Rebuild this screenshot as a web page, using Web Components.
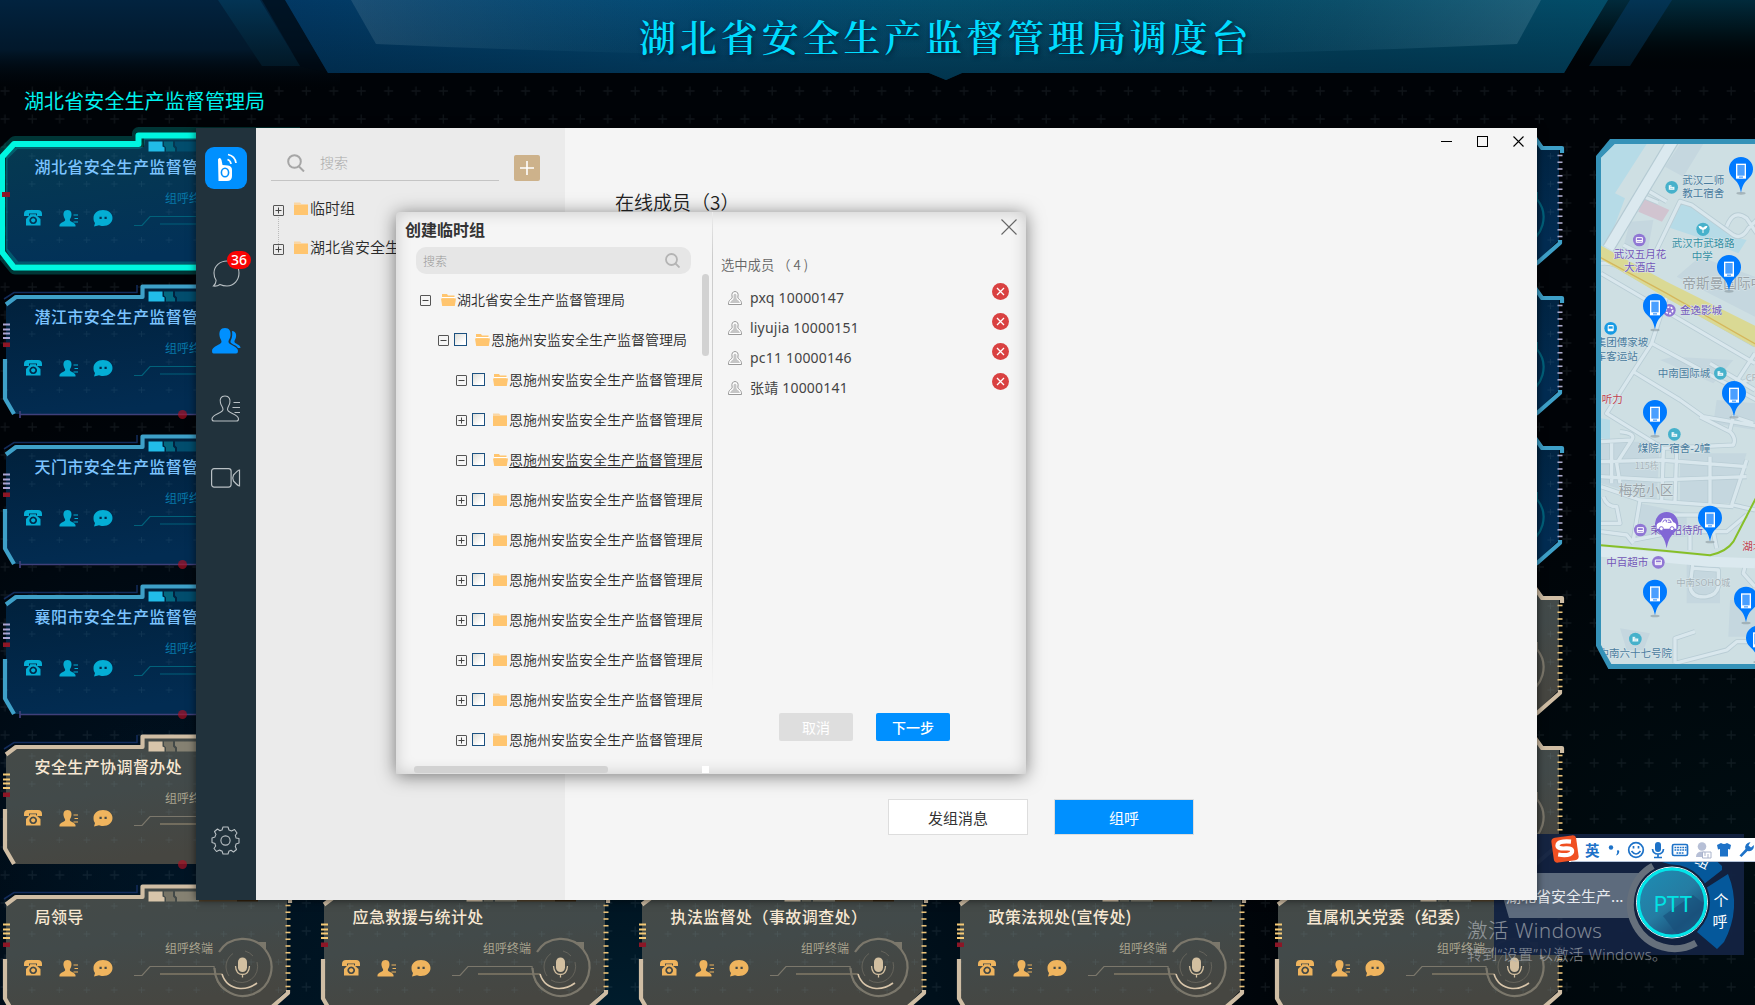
<!DOCTYPE html>
<html lang="zh-CN">
<head>
<meta charset="utf-8">
<title>湖北省安全生产监督管理局调度台</title>
<style>
html,body{margin:0;height:100%;overflow:hidden;background:#000}
body{font-family:"Noto Sans","Noto Sans CJK SC",sans-serif;color:#333}
</style>
</head>
<body>
<dispatch-desk></dispatch-desk>
<script>
const CJK = '"Noto Sans CJK SC","Noto Sans",sans-serif';
function define(name, render) {
  customElements.define(name, class extends HTMLElement {
    connectedCallback() {
      if (this.shadowRoot) return;
      this.attachShadow({ mode: 'open' }).innerHTML = render(this);
    }
  });
}

/* Top banner with the console title */
define('desk-banner', () => `
<style>
:host{display:block;position:relative;height:128px;box-sizing:border-box}
svg{position:absolute;left:0;top:0}
h1{position:relative;margin:0 0 0 639px;padding-top:9px;font:600 37px/54px "Noto Serif CJK SC","Source Han Serif SC","Noto Sans CJK SC",serif;letter-spacing:3.9px;color:#00dcff;text-shadow:1px 2px 4px rgba(0,20,40,.7);white-space:nowrap}
p{position:relative;margin:24px 0 0 24px;font:400 20px/28px ${CJK};letter-spacing:.1px;color:#00f2ee}
</style>
<svg width="1755" height="128" viewBox="0 0 1755 128">
<defs>
<linearGradient id="w" x1="0" x2="0" y1="0" y2="1"><stop offset="0" stop-color="#02233f"/><stop offset=".55" stop-color="#02182b"/><stop offset="1" stop-color="#010509" stop-opacity="0"/></linearGradient>
<linearGradient id="r" x1="0" x2="0" y1="0" y2="1"><stop offset="0" stop-color="#012a3b"/><stop offset=".45" stop-color="#001219"/><stop offset="1" stop-color="#000" stop-opacity="0"/></linearGradient>
<linearGradient id="t"><stop offset="0" stop-color="#023863"/><stop offset=".28" stop-color="#034872"/><stop offset=".5" stop-color="#044d6b"/><stop offset=".8" stop-color="#034661"/><stop offset="1" stop-color="#034c68"/></linearGradient>
<linearGradient id="d" x1="0" x2="0" y1="0" y2="1"><stop offset="0" stop-color="#001c30" stop-opacity="0"/><stop offset="1" stop-color="#001c30" stop-opacity=".5"/></linearGradient>
<linearGradient id="s" x1="0" x2="0" y1="0" y2="1"><stop offset="0" stop-color="#033454"/><stop offset="1" stop-color="#021826"/></linearGradient>
<linearGradient id="h"><stop offset="0" stop-color="#7fa0b0" stop-opacity=".2"/><stop offset=".3" stop-color="#2d80a0" stop-opacity=".02"/><stop offset=".7" stop-color="#2d80a0" stop-opacity=".02"/><stop offset="1" stop-color="#6f9db0" stop-opacity=".26"/></linearGradient>
</defs>
<path d="M0 0H340V90H0Z" fill="url(#w)"/><path d="M1600 0H1755V72H1560Z" fill="url(#r)"/>
<path d="M262 0H286L328 73 300 66Z" fill="#000a12" opacity=".55"/>
<path d="M218 0H260L300 66H262Z" fill="url(#s)"/>
<path d="M1630 0H1672L1630 66H1589Z" fill="url(#s)"/>
<path d="M285 0H1608L1564 73H962L946 80 929 73H328Z" fill="url(#t)"/>
<path d="M285 0H1608L1564 73H962L946 80 929 73H328Z" fill="url(#d)"/>
<path d="M351 0H1541L1517 44Q950 70 376 44Z" fill="url(#h)"/>
</svg>
<h1>湖北省安全生产监督管理局调度台</h1>
<p>湖北省安全生产监督管理局</p>`);

/* Group card: stepped frame, title, quick actions and talk dial */
define('group-card', el => {
  const kind = el.getAttribute('kind') || 'blue';
  const name = el.getAttribute('name') || '';
  const grey = kind === 'grey', active = kind === 'active';
  const line = active ? '#00f6e0' : grey ? '#cfbda4' : '#3ea0c8';
  const ico = grey ? '#efb45e' : '#04add4';
  const dial = grey ? '#7b776b' : '#01617a';
  const tick = grey ? '#e9c27a' : '#aaa8c8';
  const ticks = Array.from({ length: 13 }, (_, i) => `<path d="M285.500 ${25.5 + i * 6.75}h5" />`).join('');
  const frame = active ? `
<g fill="none" stroke-linejoin="round"><path d="M300 3.500H138.500V12.500H15L1 26V121L15 138H300" stroke="#00b9b0" stroke-opacity=".28" stroke-width="13"/>
<path d="M300 5.500H138.500V14H14L2 27V122L14 137.500H300" stroke="${line}" stroke-width="6"/></g>
<path d="M2 62h8v5H2z" fill="#8c1626"/>` : `
<g fill="none" stroke="${line}" stroke-width="4.200" stroke-linejoin="round">
<path d="M6 24.500 16 17H142.500V6.500H262L270 18H290V23"/><path d="M5 79V118.500L14 134"/><path d="M288 110V113L264 134"/></g>
<path d="M4 19 14 12.500H137V5" fill="none" stroke="#132c5c" stroke-width="1.500"/>
<g stroke="${grey ? '#f5ca76' : '#aaa3d2'}" stroke-width="2"><path d="M3 44.500h7M3 49.500h7M3 53.500h7M3 58h7"/></g>
<path d="M3 62.500h7v4.500H3z" fill="#8c1626"/>
<g stroke="${tick}" stroke-width="1.600">${ticks}</g>
${grey ? '' : '<path d="M20 131v7M20 134.500H262" stroke="#40407a" stroke-width="1.700"/>'}
<circle cx="182.500" cy="134.500" r="4.500" fill="#b01024" opacity=".65"/>`;
  return `
<style>
:host{display:block;position:relative;height:150px;overflow:visible}
.frame{position:absolute;left:0;top:0;overflow:visible}
.body{position:relative;box-sizing:border-box;padding:26px 0 0 24px;display:flex;flex-direction:column;white-space:nowrap}
b{font:500 16px/20px ${CJK};letter-spacing:.4px;margin-left:10.500px;height:20px;color:${grey ? '#f7e7d2' : '#7cc4ff'}}
small{font:400 12px/14px ${CJK};margin:15px 0 5px 141px;height:14px;color:${grey ? '#aaa48f' : '#0878a8'}}
.acts{display:flex;align-items:flex-start;color:${ico}}
.acts svg{display:block}
</style>
<svg class="frame" width="318" height="150" viewBox="0 0 318 150">
<defs><linearGradient id="f" x1="0" x2=".3" y1="0" y2="1">${active ? '<stop offset="0" stop-color="#063a50"/><stop offset="1" stop-color="#023158"/>' : grey ? '<stop offset="0" stop-color="#454a47"/><stop offset=".5" stop-color="#424a4a"/><stop offset="1" stop-color="#464641"/>' : '<stop offset="0" stop-color="#01203a"/><stop offset="1" stop-color="#022c52"/>'}</linearGradient>
<pattern id="p" width="27.400" height="28" patternUnits="userSpaceOnUse" x="5" y="5"><path d="M27 18v6M24 21h6M0 21h3" stroke="#8fb0c0" stroke-opacity=".1"/></pattern></defs>
<path d="M6 24 16 17H144V6H262L270 18H287V110L262 134H14L6 120Z" fill="url(#f)"/>
<path d="M6 24 16 17H144V6H262L270 18H287V110L262 134H14L6 120Z" fill="url(#p)"/>
<path d="M148.500 11.500h14v5l2 1v4h-16z" fill="${grey ? '#d8c5aa' : '#21bce8'}"/><path d="M164 11.500h9v5l2 2v3h-9v-4l-2-2z" fill="${grey ? '#777466' : '#036880'}"/><path d="M175 11.500h24v10h-22v-4l-2-2z" fill="${grey ? '#858172' : '#024d6d'}"/>
<path d="M199 11.500h38v10h-38z" fill="${grey ? '#54432b' : '#033a5c'}"/><path d="M237 11.500h21v10h-21z" fill="${grey ? '#35230f' : '#022a48'}"/>
${frame}
<g fill="none" stroke="${dial}" stroke-width="1.200"><path d="M134 95.500h8L150 86.500H214Q216 108 229 112" /><path d="M160 94H222" stroke="${grey ? '#9f9279' : dial}"/></g>
<g fill="none" stroke="${dial}"><path d="M219 72A28.500 28.500 0 1 1 214.500 88" stroke-width="2.200"/><path d="M233 73.500A16 16 0 0 0 229 96M245 71A16 16 0 0 1 253 76M257 82A16 16 0 0 1 233 100" stroke-width="1" opacity=".6"/></g>
<path d="M222 94Q226 107 240 108.500 249 109 257 103" fill="none" stroke="${grey ? '#d8c5aa' : '#0a8fae'}" stroke-width="1.600"/>
<path d="M255 62h11v10Q262 65 255 62Z" fill="${dial}"/>
<rect x="238" y="77.500" width="9" height="14.500" rx="4.500" fill="${grey ? '#d2bfa0' : '#0aa6c8'}"/><path d="M235.500 86Q236 94.500 242.500 94.500T249.500 86M242.500 94.500V97.500" fill="none" stroke="${grey ? '#d2bfa0' : '#0aa6c8'}" stroke-width="1.300"/>
</svg>
<div class="body">
${name ? `<b>${name}</b><small>组呼终端</small>
<div class="acts">
<svg width="18" height="17" viewBox="0 0 18 17" style="margin-right:17px"><path fill="currentColor" d="M0 4Q0 0 4 0H14Q18 0 18 4V6H13V3.500H5V6H0Z"/><path fill="currentColor" fill-rule="evenodd" d="M6 5V4.300H12V5L16.500 9V15.500H2V9ZM9.200 6.500A3.800 3.800 0 1 0 9.210 6.500ZM9.200 8.200A2.100 2.100 0 1 1 9.190 8.200Z"/></svg>
<svg width="20" height="17" viewBox="0 0 20 17" style="margin-right:14px"><path fill="currentColor" d="M8.500 0C12 0 13 3 12.300 6 12 8 11 8.500 10.800 10 11 12 16 12.500 16.500 15V16.500H.5V15C1 12.500 6 12 6.200 10 6 8.500 5 8 4.700 6 4 3 5 0 8.500 0Z"/><path d="M14.500 5H19M15.500 8.500H19M14.500 12H19" stroke="currentColor" stroke-width="1"/></svg>
<svg width="20" height="17" viewBox="0 0 20 17"><path fill="currentColor" fill-rule="evenodd" d="M10 0C15.500 0 19.500 3.500 19.500 8S15.500 16 10 16C8 16 7 15.700 6 15.200L1 16.500 2 13C1 12 .5 10 .5 8 .5 3.500 4.500 0 10 0ZM6.500 6.800V9H8.700V6.800ZM11.500 6.800V9H13.700V6.800Z"/></svg>
</div>` : ''}
</div>`;
});

/* Expander + optional check box + folder icon + label */
define('tree-node', el => {
  const open = el.hasAttribute('open'), check = el.hasAttribute('check');
  return `
<style>
:host{display:flex;align-items:center;height:var(--row,40px);white-space:nowrap;box-sizing:border-box;padding-left:calc(var(--level,0)*18px)}
svg{display:block;flex:none}
.x{margin-top:3px}
i{flex:none;width:11px;height:11px;border:1px solid #1c5180;background:linear-gradient(135deg,#dcdcd7,#fff 75%);margin:0 0 0 5px}
.fo{margin:1px 1px 0 ${check ? 8 : 10}px}
span{font:350 var(--fs,14px)/20px ${CJK};color:#2b2b2b;margin-top:-1px${el.hasAttribute('hovered') ? ';text-decoration:underline;text-underline-offset:2px' : ''}}
</style>
<svg class="x" width="11" height="11" viewBox="0 0 11 11"><rect x=".5" y=".5" width="10" height="10" rx=".5" fill="none" stroke="#555"/><path d="M2.500 5.500h6${open ? '' : 'M5.500 2.500v6'}" stroke="#444"/></svg>
${check ? '<i></i>' : ''}
<svg class="fo" width="15" height="14" viewBox="0 0 15 14">${open
  ? '<path d="M1 1h5l1 1.500h6.500V6H1z" fill="#ffc56f"/><path d="M1 4.600h13" stroke="#fff" stroke-width="1.200"/><path d="M0 5.500h15L13.800 13H1.200z" fill="#ffc56f"/>'
  : '<path d="M0 .5h6L7.500 2H14v4H0z" fill="#fad7a5"/><path d="M0 3h14v10H0z" fill="#ffc56f"/>'}</svg>
<span><slot></slot></span>`;
});

define('member-row', () => `
<style>
:host{display:flex;align-items:center;height:30px}
svg{display:block;flex:none}
span{font:400 14px/20px "Noto Sans","Noto Sans CJK SC",sans-serif;color:#444;margin-left:8px;flex:1;letter-spacing:.2px}
.del{margin-top:-14px}
</style>
<svg width="14" height="14" viewBox="0 0 14 14"><path d="M7 .5C9.500.5 10.500 3 10 5 9.500 6.700 10 7.500 11.500 8.500 13 9.500 13.500 11 13.500 13.500H.5C.5 11 1 9.500 2.500 8.500 4 7.500 4.500 6.700 4 5 3.500 3 4.500.5 7 .5Z" fill="#fff" stroke="#999"/><path d="M7 2.500Q9 3 8.500 5T9 8.500Q11.500 9.500 12 12H2Q2.500 9.500 5 8.500 6 7 5.500 5T7 2.500Z" fill="#c6c6c6"/></svg>
<span><slot></slot></span>
<svg class="del" width="17" height="17" viewBox="0 0 17 17"><circle cx="8.500" cy="8.500" r="8.500" fill="#d94141"/><path d="M5 5l7 7M12 5l-7 7" stroke="#fff" stroke-width="1.300"/></svg>`);

define('push-button', () => `
<style>:host{display:flex;align-items:center;justify-content:center;box-sizing:border-box;white-space:nowrap;font-family:${CJK}}</style><slot></slot>`);

define('side-rail', () => `
<style>
:host{display:flex;flex-direction:column;align-items:center;width:60px;flex:none;background:#21323c;box-sizing:border-box;padding-top:19px}
svg{display:block;flex:none}
.chat{position:relative;margin-top:70px}
.chat b{position:absolute;left:15px;top:-8px;width:24px;height:18px;border-radius:9px;background:#f90404;color:#fff;font:500 14px/18px "Noto Sans",sans-serif;text-align:center}
</style>
<svg width="42" height="42" viewBox="0 0 42 42"><rect width="42" height="42" rx="9" fill="#0090ff"/><path d="M13 12.500Q15 9.500 16.500 13L17.500 18 23 18.500Q27 19 27 23V29Q27 34 22 34H13.500Z" fill="#fff"/><ellipse cx="20" cy="25.500" rx="3.600" ry="4.300" fill="none" stroke="#0090ff" stroke-width="1.600"/><path d="M22.500 12.500Q25.500 13.500 26 17M23 7.500Q30 9 31 16" stroke="#fff" stroke-width="1.700" fill="none"/></svg>
<div class="chat"><svg width="28" height="28" viewBox="0 0 28 28"><path d="M15 2C8 2 2 7 2 14 2 17 3 19.500 4 21Q4.500 24 1.500 27 5 27.500 8 25.500C10 26.500 12 27 15 27 22 27 27 21 27 14S22 2 15 2Z" fill="none" stroke="#b9c0c4" stroke-width="1.100"/></svg><b>36</b></div>
<svg style="margin-top:41px" width="29" height="26" viewBox="0 0 29 26"><path fill="#0090ff" d="M13 0C17.500 0 19 3.500 18.500 7.500 18 11 16.500 11.500 16.500 14 16.500 17 26 18 26 23Q26 25.500 24 25.500H1.500Q0 25.500 0 23C0 18 9 17 9.500 14 9.500 11.500 8 11 7.500 7.500 7 3.500 8.500 0 13 0Z"/><path fill="#0090ff" d="M20 3C24 3.500 24.500 6.500 24 9 23.500 11.500 22 12.500 22.500 14 23 16 28.500 16.500 28.500 20H26C24.500 17 18.500 16 18.500 14 18.500 11.500 21 10 20 3Z"/></svg>
<svg style="margin-top:41px" width="30" height="27" viewBox="0 0 30 27"><path d="M14 1C18.500 1 19.500 4.500 18.800 8 18.300 11 16.500 11.500 16.500 14.500 16.500 18.500 27.500 18.500 27.500 24Q27.500 26 25.500 26H3Q1 26 1 24C1 18.500 12 18.500 12 14.500 12 11.500 10 11 9.500 8 8.500 4.500 9.500 1 14 1Z" fill="none" stroke="#b9c0c4" stroke-width="1.100"/><path d="M22.500 7.500H29M21.500 12.500H29M23.500 17.500H29" stroke="#b9c0c4"/></svg>
<svg style="margin-top:46px" width="30" height="20" viewBox="0 0 30 20"><rect x=".6" y=".6" width="19.500" height="18.500" rx="2.500" fill="none" stroke="#b9c0c4" stroke-width="1.200"/><path d="M28.500 2V18Q27 18 22.500 13Q21 10 22.500 7Q27 2 28.500 2Z" fill="none" stroke="#b9c0c4" stroke-width="1.200"/></svg>
<svg style="margin:auto 0 45px -1px" width="29" height="29" viewBox="-14.500 -14.500 29 29"><path fill="none" stroke="#b9c0c4" stroke-width="1.100" stroke-linejoin="round" d="M-2.500-13.500H2.500L3.500-10.500Q5-10 6-9.500L9-11 11.500-7.500 9.800-5Q10.300-4 10.500-2.500L13.500-2V2.500L10.500 3.500Q10.300 5 9.800 6L11 9 8 11.500 5.500 9.800Q4.500 10.300 3.500 10.500L2.500 13.500H-2.500L-3.500 10.500Q-5 10.300-6 9.500L-9 11-11.500 8-9.800 5.500Q-10.300 4.500-10.500 3L-13.500 2V-2.500L-10.500-3.500Q-10.300-5-9.500-6L-11-9-8-11.500-5.500-9.800Q-4.500-10.300-3.500-10.500Z"/><circle r="4.600" fill="none" stroke="#b9c0c4" stroke-width="1.100"/></svg>`);

define('group-pane', () => `
<style>
:host{display:block;width:309px;flex:none;background:#ebebeb;box-sizing:border-box;padding:22px 25px 0 15px;--fs:15px;--row:39px}
.bar{display:flex;align-items:flex-start;justify-content:space-between}
.s{display:flex;align-items:center;width:228px;height:30px;border-bottom:1px solid #c4c4c4;box-sizing:content-box}
.s svg{margin:-4px 0 0 16px}
.s span{font:300 14px/20px ${CJK};color:#aaa;margin:-7px 0 0 15px}
.add{width:26px;height:26px;border-radius:2px;background:#cdb28b;margin-top:5px;display:block}
.tree{margin:8px 0 0 2px;position:relative}
.tree::before{content:"";position:absolute;left:5px;top:28px;height:29px;border-left:1px dotted #bbb}
</style>
<div class="bar"><div class="s"><svg width="18" height="18" viewBox="0 0 18 18" fill="none" stroke="#a6a6a6" stroke-width="2"><circle cx="7.500" cy="7.500" r="6.300"/><path d="M12 12.500l5 5"/></svg><span>搜索</span></div>
<svg class="add" viewBox="0 0 26 26"><path d="M6 13H20M13 6V20" stroke="#fff" stroke-width="1.600"/></svg></div>
<div class="tree"><tree-node>临时组</tree-node><tree-node>湖北省安全生产监督管理局</tree-node></div>`);

define('create-dialog', () => {
  const long = '恩施州安监安全生产监督管理局';
  const rows = Array.from({ length: 10 }, (_, i) =>
    `<tree-node check style="--level:2" ${i === 0 || i === 2 ? 'open' : ''} ${i === 2 ? 'hovered' : ''}>${long}</tree-node>`).join('');
  return `
<style>
:host{display:flex;box-sizing:border-box;background:#f5f5f5;border-radius:4px 4px 1px 1px;box-shadow:0 2px 18px rgba(0,0,0,.5),inset 0 0 16px rgba(0,0,0,.18);overflow:visible}
.left{width:317px;flex:none;height:562px;display:flex;flex-direction:column;box-sizing:border-box;padding:7px 3px 1px 0;border-right:1px solid;border-image:linear-gradient(#eee 0,#ccc 8%,#d8d8d8 65%,transparent 85%) 1}
h2{margin:0 0 8px 9px;font:600 16px/20px ${CJK};color:#333}
.s{display:flex;align-items:center;justify-content:space-between;width:275px;height:27px;box-sizing:border-box;margin-left:20px;padding:0 11px 0 7px;border-radius:10px;background:#e6e6e6}
.s span{font:300 12px/18px ${CJK};color:#999}
.scroll{display:flex;height:492px;padding-left:18px}
.tree{flex:1;min-width:0;overflow:hidden;padding:5px 0 0 6px;box-sizing:border-box}
.v{width:7px;height:82px;border-radius:3.500px;background:#d2d2d2}
.h{display:flex;justify-content:space-between;padding-left:18px;height:7px}
.h i{width:194px;border-radius:3px;background:#d2d2d2}.h u{width:7px;background:#fff}
.right{flex:1;display:flex;flex-direction:column;padding:0 9px 0 8px;box-sizing:border-box}
.close{align-self:flex-end;margin:7px 0 0}
h3{margin:20px 0 0;font:350 13.300px/20px ${CJK};color:#666;white-space:pre}
.m{padding:8px 8px 0 7px}
.btns{display:flex;gap:23px;margin:auto 0 33px 58px}
push-button{width:74px;height:28px;border-radius:2px;font-size:14px;color:#fff;background:#dedede}
.ok{background:#0090ff;font-weight:500}
</style>
<div class="left"><h2>创建临时组</h2>
<div class="s"><span>搜索</span><svg width="15" height="15" viewBox="0 0 15 15" fill="none" stroke="#b4b4b4" stroke-width="1.800"><circle cx="6.500" cy="6.500" r="5.500"/><path d="M10.500 10.500l4 4"/></svg></div>
<div class="scroll"><div class="tree"><tree-node open>湖北省安全生产监督管理局</tree-node><tree-node open check style="--level:1">${long}</tree-node>${rows}</div><div class="v"></div></div>
<div class="h"><i></i><u></u></div></div>
<div class="right"><svg class="close" width="16" height="16" viewBox="0 0 16 16"><path d="M.5.5l15 15M15.500.5l-15 15" stroke="#666" stroke-width="1.100"/></svg>
<h3>选中成员 （ 4 )</h3>
<div class="m"><member-row>pxq 10000147</member-row><member-row>liyujia 10000151</member-row><member-row>pc11 10000146</member-row><member-row>张靖 10000141</member-row></div>
<div class="btns"><push-button>取消</push-button><push-button class="ok">下一步</push-button></div></div>`;
});

define('client-window', () => `
<style>
:host{display:flex;background:#f5f5f5;box-shadow:0 0 8px rgba(0,0,0,.6)}
.main{flex:1;display:flex;flex-direction:column}
.ctl{display:flex;justify-content:flex-end;align-items:center;gap:25px;padding:8px 13px 0 0;height:11px}
h2{font:350 19px/26px ${CJK};color:#222;margin:42px 0 0 50px}
.b{display:flex;gap:26px;margin:auto 0 65px 323px}
push-button{width:140px;height:36px;border:1px solid #ddd;background:#fff;font-size:15px;color:#333}
.p{background:#0090ff;color:#fff}
create-dialog{position:absolute;left:200px;top:84px;width:630px;height:562px}
</style>
<side-rail></side-rail><group-pane></group-pane>
<div class="main"><div class="ctl">
<svg width="11" height="11"><path d="M0 5.500h11" stroke="#000"/></svg><svg width="11" height="11"><rect x=".5" y=".5" width="10" height="10" fill="none" stroke="#000"/></svg><svg width="11" height="11"><path d="M.5.500l10 10M10.500.500l-10 10" stroke="#000" stroke-width="1.100"/></svg></div>
<h2>在线成员（3）</h2>
<div class="b"><push-button>发组消息</push-button><push-button class="p">组呼</push-button></div></div>
<create-dialog></create-dialog>`);

/* City map, drawn at three units per pixel */
define('map-panel', () => {
  const pins = [[723,118],[687,412],[465,528],[702,790],[465,847],[630,1164],[465,1386],[738,1407],[774,1524]];
  const pin = ([x, y]) => `<g transform="translate(${x} ${y})"><ellipse cx="0" cy="72" rx="14" ry="4" fill="#7d8b92" opacity=".5"/><path d="M0 70C-5 44-12 38-24 26A36 36 0 1 1 24 26C12 38 5 44 0 70Z" fill="#007aff"/><rect x="-15" y="-17" width="30" height="45" fill="#fff"/><rect x="-11" y="-13" width="22" height="32" fill="#4a9fff"/><path d="M-6 23.500h12" stroke="#4a9fff" stroke-width="4"/></g>`;
  const poi = (x, y, c) => `<circle cx="${x}" cy="${y}" r="19" fill="${c}"/><path d="M${x-9} ${y+8}v-15h9v5h9v10zM${x-5} ${y-2}h3M${x-5} ${y+3}h10" fill="#fff" stroke="${c}" stroke-width="1.500"/>`;
  const bed = (x, y) => `<circle cx="${x}" cy="${y}" r="19" fill="#9077d4"/><path d="M${x-9} ${y-7}h18v14h-18z" fill="none" stroke="#fff" stroke-width="3"/><path d="M${x-9} ${y+2}h18" stroke="#fff" stroke-width="4"/>`;
  const T = (x, y, s, c, z = 31.5, a = 'middle') => `<text x="${x}" y="${y}" font-size="${z}" fill="${c}" text-anchor="${a}">${s}</text>`;
  const b = '#4a7c9e', v = '#7256b8', g = '#9aa3a8';
  const roads = `M440 180L500 215M420 195L475 218M460 380L540 214L575 225L700 315Q725 330 745 295L770 270M770 310L740 265Q700 235 680 290M370 345L430 375
M303 400Q340 395 380 425L765 645M303 430L765 700M500 500L455 640L770 810M455 640L400 725L540 810M400 725L320 850L490 955L700 945Q710 925 690 905L600 860M765 670L700 770L765 740M540 810L610 860L780 890M630 700L765 780
M303 935L395 930Q410 910 360 905M335 940V1060M395 930L350 1000L360 1060M303 995L480 990L740 1010M303 1040L470 1050L740 1040M303 1070L420 1110L700 1130M420 1110L400 1230M490 960L485 1115M530 965L525 1115M630 980V1125M740 990L695 1125M700 1125L765 1140M520 1155H660M400 1230L530 1205H680L740 1155M303 1205L380 1215L400 1240M570 1215V1260M640 1205L650 1255M310 1100Q320 1130 350 1130L360 1180H303M580 1290L570 1370Q575 1405 620 1400Q650 1395 655 1370V1320L580 1315M740 1290L730 1330L765 1370M525 1600L525 1525L585 1505M525 1600L680 1560L710 1535H770M690 900L700 860L760 880`;
  return `
<style>
:host{display:block;overflow:hidden}
svg{display:block}
text{font-family:${CJK};stroke:#d9e6ea;stroke-width:3px;paint-order:stroke}
</style>
<svg width="159" height="530" viewBox="288 27 477 1590">
<defs><clipPath id="c"><path d="M303 84 345 42H765V1602H334L303 1545Z"/></clipPath></defs>
<path d="M330 27H765V1617H325L288 1548V78Z" fill="#3592b8"/>
<g clip-path="url(#c)">
<path d="M300 30H770V1610H300Z" fill="#cedfe3"/>
<path d="M303 42H440L345 190L375 205L320 350H303ZM540 205L700 320L740 330L715 370L590 320L500 290ZM303 865L330 870V930L303 925Z" fill="#b6dbe7"/>
<path d="M540 42H610L550 140L495 110ZM390 275L460 270L440 380L370 350ZM600 380L765 440V560L530 440ZM520 680L700 690L640 760L480 690ZM303 935H480L470 1110L303 1060ZM540 970H740L690 1120H540ZM420 1120L560 1150V1220H420ZM560 1300H660V1420H560ZM690 1410H765V1520H685ZM360 1495L450 1510 430 1560H380ZM650 810L765 820V900L640 880Z" fill="#c5d7df"/>
<path d="M430 205L508 240L486 275L415 245Z" fill="#d1c4d0"/>
<path d="${roads}" fill="none" stroke="#b9cdd5" stroke-width="15" stroke-linejoin="round"/>
<path d="${roads}" fill="none" stroke="#d9e7ed" stroke-width="10" stroke-linejoin="round"/>
<path d="M520 30L325 355" stroke="#b5cad3" stroke-width="38"/><path d="M520 30L325 355" stroke="#dbe9ef" stroke-width="31"/>
<path d="M303 1265L630 1295L765 1300" fill="none" stroke="#dbe9ef" stroke-width="30"/>
<path d="M290 340L500 455L780 595V660L500 505L290 380Z" fill="#dad994"/><path d="M290 376L500 490L780 650" stroke="#d5b75c" stroke-width="4" fill="none"/>
<path d="M303 1246L500 1263L630 1276Q680 1265 700 1235L770 1100" fill="none" stroke="#86bf28" stroke-width="6"/>
${poi(515,172,'#46b1cb')}${poi(661,730,'#46b1cb')}${poi(523,913,'#46b1cb')}${poi(406,1527,'#46b1cb')}
<circle cx="609" cy="298" r="20" fill="#46b1cb"/><path d="M609 309v-12q-2-8-12-8 1 9 12 9 10 0 12-9-10 0-12 8" fill="#fff" stroke="#fff" stroke-width="3"/>
<circle cx="332" cy="595" r="19" fill="#189be4"/><rect x="323" y="585" width="18" height="19" rx="3" fill="#fff"/><path d="M326 589h12v7h-12z" fill="#189be4"/>
${bed(418,330)}${bed(421,1200)}${bed(475,1297)}<circle cx="508" cy="541" r="19" fill="#9077d4"/><circle cx="508" cy="541" r="10" fill="none" stroke="#fff" stroke-width="5" stroke-dasharray="6 4"/>
${T(610,163,'武汉二师',b)}${T(610,202,'教工宿舍',b)}${T(610,352,'武汉市武珞路','#3590a4')}${T(607,391,'中学','#3590a4')}
${T(420,384,'武汉五月花',v)}${T(420,424,'大酒店',v)}${T(547,474,'帝斯曼国际中心',g,41,'start')}${T(540,553,'金逸影城',v,31.5,'start')}
${T(445,649,'集团傅家坡',b,31.5,'end')}${T(413,689,'汽车客运站',b,31.5,'end')}${T(552,741,'中南国际城',b)}${T(305,819,'听力','#c0404d',31.5,'start')}
${T(737,752,'CRC','#adb6bb',28,'start')}${T(522,966,'煤院厂宿舍-2幢',b)}${T(440,1016,'115栋','#a6b2b8',27)}${T(438,1096,'梅苑小区',g,41)}
${T(530,1211,'荣盛招待所',v)}${T(382,1308,'中百超市',v)}${T(610,1367,'中南SOHO城','#a6b2b8',28)}${T(727,1261,'湖北','#c0404d',31.5,'start')}${T(516,1580,'中南六十七号院',b,31.5,'end')}
${pins.map(pin).join('')}
<g transform="translate(500 1182)"><path d="M0 73C-5 45-12 38-22 26A35 35 0 1 1 22 26C12 38 5 45 0 73Z" fill="#8167d5"/><path d="M-30 14V4Q-28-4-18-5L-10-17H12L20-5Q29-3 29 6V14Z" fill="#fff"/><path d="M-12-5L-7-12H-1V-5M3-12H9L14-5H3M-2-20H7" stroke="#8167d5" stroke-width="3" fill="none"/><circle cx="-16" cy="14" r="6" fill="#fff" stroke="#8167d5" stroke-width="3"/><circle cx="16" cy="14" r="6" fill="#fff" stroke="#8167d5" stroke-width="3"/></g>
</g></svg>`;
});

/* Push-to-talk panel */
define('ptt-panel', () => `
<style>
:host{display:block;background:rgba(19,34,66,.96)}
svg{display:block}
text{font-family:${CJK}}
</style>
<svg width="250" height="121" viewBox="0 0 250 121">
<defs><linearGradient id="g" x1="0" y1="0" x2=".8" y2="1"><stop offset="0" stop-color="#1c8fb6"/><stop offset=".55" stop-color="#257ca2"/><stop offset=".8" stop-color="#1d5680"/><stop offset="1" stop-color="#1f6d96"/></linearGradient></defs>
<path d="M2 39H146Q130 62 139 84H15Z" fill="#5d6b7d"/>
<path d="M159 32A43 43 0 1 0 202 109" fill="none" stroke="#66707c" stroke-width="7"/>
<path d="M167 20Q200 4 228 32V36L210 50Q196 35 168 28Z" fill="#05589b"/>
<path d="M212 54L234 40Q248 74 230 108L223 115L203 98Q217 80 212 54Z" fill="#05589b"/>
<circle cx="178" cy="68.500" r="38" fill="#13223f"/><circle cx="178" cy="68.500" r="35.500" fill="url(#g)" stroke="#e8f7fa" stroke-width="1"/>
<path d="M169 82L199 61 213 72Q210 96 185 103Z" fill="#184f79" opacity=".6"/>
<circle cx="178" cy="68.500" r="33.500" fill="none" stroke="#02e6ea" stroke-width="3"/>
<text x="12" y="67.500" font-size="15" fill="#e8eaee">湖北省安全生产...</text>
<text x="179" y="78" font-size="21.500" fill="#02e2e4" text-anchor="middle">PTT</text>
<text x="227" y="72" font-size="15" fill="#fff" text-anchor="middle">个</text><text x="226" y="93" font-size="15" fill="#fff" text-anchor="middle">呼</text>
<text transform="translate(200 29) rotate(27)" font-size="14" fill="#fff">组</text>
</svg>`);

/* Input-method floating bar */
define('ime-bar', () => `
<style>:host{display:block}svg{display:block}text{font-family:${CJK}}</style>
<svg width="204" height="28" viewBox="0 0 204 28"><path d="M18 3H204V27H18Z" fill="#fff"/><path d="M20 26.500H204" stroke="#b5c3d8"/>
<g fill="#1d72c8"><text x="34" y="20.500" font-size="14.500" font-weight="700">英</text><circle cx="60" cy="12.500" r="2.200"/><path d="M66 15.500q3-1 2 2.500-1 2-3 2.500 2-2 1-5z"/></g>
<g fill="none" stroke="#1d72c8" stroke-width="1.700"><circle cx="85" cy="15" r="7.300"/><path d="M80.500 16q4.500 6 9 0M82.500 11v2.500M87.500 11v2.500"/><path d="M101.500 14Q102 19 107 19T112.500 14M107 19V22M103 22.500H111"/></g>
<rect x="104" y="7" width="6" height="10" rx="3" fill="#1d72c8"/>
<rect x="121.500" y="9.500" width="15" height="11" rx="1.500" fill="#fff" stroke="#1d72c8" stroke-width="1.700"/><path d="M123.500 12.500h12M123.500 15h12M125.500 18h7" stroke="#1d72c8" stroke-width="1.600" stroke-dasharray="1.800 .8"/>
<g fill="#b6bfd6"><circle cx="151" cy="11.500" r="4.300"/><path d="M145 22Q145 16.500 151 16.500T156 22Z"/></g><path d="M151.500 17h8.500v6h-8.500zM154 17v4M157 19v4" fill="#fff" stroke="#aab4cc"/>
<path d="M166 10L170 8Q173 10 176 8L180 10 179 14.500 177 14V21.500H169V14L167 14.500Z" fill="#1d72c8"/>
<path d="M188.500 20.500L194.500 14Q193 8.500 199.500 7L197.500 10.500 200 12.500 203 10Q203 17 196.500 16L190.500 22Z" fill="#1d72c8"/>
<g transform="rotate(-8 14 14)"><rect x="1.500" y="1.500" width="25" height="25" rx="4" fill="#f05022"/><path d="M21 7.500Q8 4.500 7 9.500 6.500 13 15 13.500 22 14 20.500 18 18 22 6.500 18.500" fill="none" stroke="#fff" stroke-width="4.200"/></g>
</svg>`);

define('dispatch-desk', () => {
  const first = ['湖北省安全生产监督管理局','潜江市安全生产监督管理局','天门市安全生产监督管理局','襄阳市安全生产监督管理局','安全生产协调督办处','局领导'];
  const bottom = ['应急救援与统计处','执法监督处（事故调查处）','政策法规处(宣传处)','直属机关党委（纪委）'];
  const card = (c, r, kind, name = '') => `<group-card style="grid-column:${c};grid-row:${r}" kind="${kind}" name="${name}"></group-card>`;
  return `
<style>
:host{display:block;position:relative;width:1755px;height:1005px;overflow:hidden;background:
radial-gradient(ellipse 700px 420px at 620px 1005px,#001c2c 0,rgba(0,20,34,.6) 55%,transparent),
radial-gradient(ellipse 420px 500px at 180px 900px,#001527 0,transparent),
radial-gradient(ellipse 500px 400px at 1755px 850px,#000d12 0,transparent),#000307}
.stars{position:absolute;left:0;top:0}
.cards{position:relative;display:grid;grid-template-columns:repeat(5,318px);grid-template-rows:repeat(6,150px);margin-top:2px}
client-window{position:absolute;left:196px;top:128px;width:1341px;height:772px}
map-panel{position:absolute;left:1596px;top:139px;width:159px;height:530px}
ptt-panel{position:absolute;left:1494px;top:834px;width:250px;height:121px}
ime-bar{position:absolute;left:1551px;top:835px;width:204px;height:28px}
.wm{position:absolute;left:1467px;top:915px;font-family:"Open Sans","Noto Sans CJK SC",sans-serif;font-weight:300;color:rgba(185,190,195,.62);white-space:nowrap;text-shadow:0 0 1px rgba(150,150,150,.35)}
.wm div:first-child{font-size:20.500px;line-height:30px;letter-spacing:.55px}.wm div+div{font-size:15px;line-height:18px;letter-spacing:.35px}
</style>
<svg class="stars" width="1755" height="1005"><defs><pattern id="s" width="27.400" height="28" patternUnits="userSpaceOnUse" x="-9" y="-7"><path d="M14 9.500v9M9.500 14h9" stroke="#a8c0c8" stroke-opacity=".09" stroke-width="1.300"/></pattern></defs><path d="M0 77H1755V1005H0Z" fill="url(#s)"/></svg>
<desk-banner></desk-banner>
<div class="cards">
${first.map((n, i) => card(1, i + 1, i === 0 ? 'active' : i < 4 ? 'blue' : 'grey', n)).join('')}
${['blue','blue','blue','grey','grey'].map((k, i) => card(5, i + 1, k)).join('')}
${bottom.map((n, i) => card(i + 2, 6, 'grey', n)).join('')}
</div>
<map-panel></map-panel><ptt-panel></ptt-panel><client-window></client-window><ime-bar></ime-bar>
<div class="wm"><div>激活 Windows</div><div>转到“设置”以激活 Windows。</div></div>`;
});
</script>
</body>
</html>
